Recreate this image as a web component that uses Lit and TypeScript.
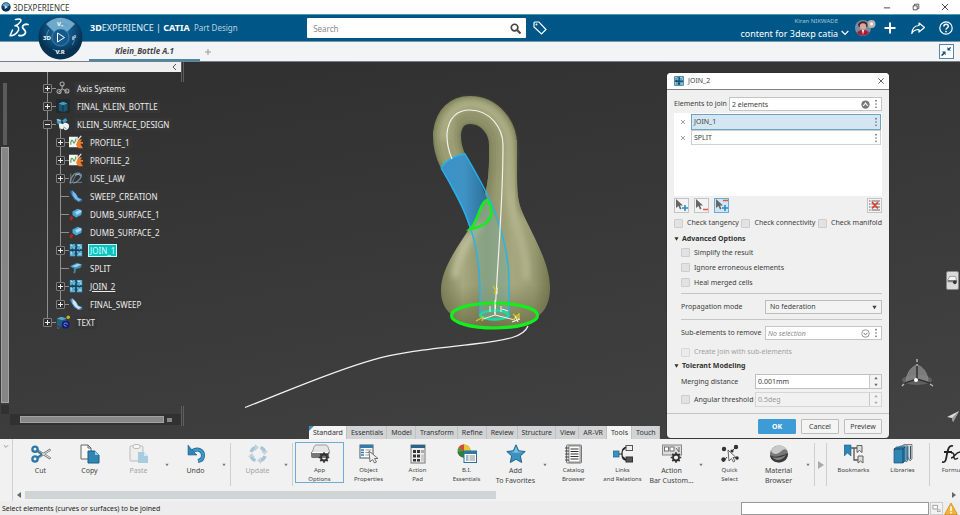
import { LitElement, html, css, svg, nothing } from "lit";
import { customElement, property } from "lit/decorators.js";

const ic = (body: unknown, box = "0 0 20 20", cls = "ic") =>
  html`<svg class=${cls} viewBox=${box} aria-hidden="true">${body}</svg>`;

/* ---------- small glyphs ---------- */
const globe = svg`<circle cx="8" cy="8" r="7.5" fill="#123f66"/><path d="M2 5a7 7 0 0 1 12 0c-3 3-9 3-12 0z" fill="#5aa0cf"/><path d="M6 5l5 3-5 3z" fill="#cfe6f5"/><path d="M1 9c2 6 11 7 14 0-4 3-10 3-14 0z" fill="#0d2b49"/>`;
const joinGlyph = svg`<rect x=".5" y=".5" width="15" height="15" fill="#16455f"/><path d="M1 1h2l1 1 1-1h2v2l1 1-1 1v2H5L4 6 3 7H1zM9 1h6v6h-2l-1 1-1-1H9V5l1-1-1-1zM1 9h2l1 1 1-1h2v2L6 12l1 1v2H1zM9 9h2l1 1 1-1h2v6H9v-2l1-1-1-1z" fill="#5caacb"/><path d="M2 2h2v1H2zM10 2h3v1h-3zM2 10h1v3H2zM11 12h3v1h-3zM5 5h1v1H5zM13 4h1v2h-1z" fill="#c9ecfa"/>`;
const dots = svg`<circle cx="2" cy="2" r="1"/><circle cx="2" cy="6" r="1"/><circle cx="2" cy="10" r="1"/>`;
const cross = svg`<path d="M2 2l8 8M10 2l-8 8" stroke="currentColor" stroke-width="1.4" fill="none"/>`;
const chevDown = svg`<path d="M1 3l5 5 5-5" stroke="currentColor" stroke-width="1.8" fill="none"/>`;
const triDown = svg`<path d="M1 2h10l-5 8z" fill="currentColor"/>`;
const triUp = svg`<path d="M1 10h10l-5-8z" fill="currentColor"/>`;

/* ---------- tree icons, 16 x 16 ---------- */
const sweepBlue = (a: string, b: string) =>
  svg`<path d="M1 3l3-2 4 4 3 5 4 1v3l-4 1-5-3-3-5z" fill=${a}/><path d="M4 2l4 4 2 4 4 2-3 2-4-3-3-4z" fill=${b}/>`;
const treeIcons: Record<string, unknown> = {
  axis: svg`<g fill="none" stroke="#aaa" stroke-width="1.2"><path d="M7 9l-4 4m4-4l6 3M7 9V5"/><circle cx="7" cy="3.500" r="2.300"/><circle cx="3.500" cy="12" r="2.300"/><circle cx="12.500" cy="11.500" r="2.300"/></g>`,
  body: svg`<rect width="16" height="16" fill="#1f2a31"/><path d="M3 5l5-2 5 2v8l-5 2-5-2z" fill="#1d5671"/><path d="M3 5l5-2 5 2-5 2z" fill="#4d9cba"/><path d="M8 7v8" stroke="#0d2c3a"/>`,
  set: svg`<path d="M1 2l5 1v5l-5-1zM7 4l4-3 2 3-4 3z" fill="#3ea0c8"/><path d="M3 7l5 1v6l-4-1zM8 8c2-3 7-1 7 2s-2 5-4 5-4-4-3-7z" fill="#e9f4f8"/><path d="M1 3l4 1" stroke="#bfe8f7"/><path d="M9 11l3 3" stroke="#777"/>`,
  profile: svg`<rect x="0" y="2" width="10" height="12" fill="#f4f4f4"/><path d="M2 11c0-6 2-6 3-3s2 0 3-4" stroke="#58a058" stroke-width="1.3" fill="none"/><path d="M14 1l-6 7" stroke="#ddd" stroke-width="1.6"/><path d="M11 5h4l-2 3h3v2h-3l3 5h-5l-3-4z" fill="#f07a25"/>`,
  law: svg`<path d="M1 14C3 4 8 0 14 4c1 4-5 9-9 10" fill="none" stroke="#6b8fa6" stroke-width="1.4"/><path d="M2 15V3M1 13h14M12 2c-4 2-7 6-8 11" stroke="#8d9ba6" stroke-width=".8" fill="none"/><path d="M7 5c3-2 6-1 6 1" stroke="#b5d6ea" fill="none"/>`,
  sweep: sweepBlue("#2b6fa5", "#7fbbe6"),
  dumb: svg`<path d="M4 5l6-3 5 2-1 5-6 3-4-3z" fill="#4ba7d8"/><path d="M7 6l6-3 1 3-5 3z" fill="#a5dcf5"/><path d="M1 12l2-2 2 2-2 3H1z" fill="#b02525"/>`,
  join: joinGlyph,
  split: svg`<path d="M1 6l8-4 6 2-2 4-5 1-1 5H5l1-5z" fill="#3f8fb5"/><path d="M3 6l7-3 4 1-6 3z" fill="#9fd6ec"/>`,
  final: sweepBlue("#4d87bd", "#cfe5fa"),
  text: svg`<path d="M1 4l5-2 6 2v8l-5 2-6-2z" fill="#255f7c"/><path d="M1 4l5-2 6 2-5 2z" fill="#5ba3be"/><circle cx="14" cy="2.500" r="2" fill="#c9b416"/><circle cx="11" cy="11" r="4.500" fill="#101d7a"/><path d="M9 11a2 2 0 0 1 4 0m-1 2l-3-1" stroke="#8ea3ff" fill="none"/><path d="M1 13l3 1v2H1z" fill="#555"/>`,
};

/* ---------- command icons, 20 x 20 ---------- */
const pageBack = svg`<path d="M1 1h7l3 3v11H1z" fill="#f7f7f7" stroke="#666"/><path d="M8 1v3h3" fill="none" stroke="#666"/>`;
const gear = (x: number, y: number) =>
  svg`<g transform="translate(${x} ${y})"><circle r="3" fill="none" stroke="#333" stroke-width="1.800"/><path d="M0-5.300v2M0 3.300v2M-5.300 0h2M3.300 0h2M-3.700-3.700l1.300 1.300M2.400 2.400l1.300 1.300M3.700-3.700L2.400-2.400M-2.400 2.400l-1.300 1.300" stroke="#333" stroke-width="1.700"/></g>`;
const cmdIcons: Record<string, unknown> = {
  cut: svg`<g fill="none"><path d="M6.500 6.500L19.500 14.500M6.500 14L19.500 5.500" stroke="#777" stroke-width="2.400"/><path d="M8 7.500L19 14M8 13L19 6" stroke="#fff" stroke-width=".8"/><circle cx="4" cy="5.200" r="2.600" stroke="#2b7aa6" stroke-width="2.400"/><circle cx="4" cy="15" r="2.600" stroke="#2b7aa6" stroke-width="2.400"/><path d="M6 7l5 3.500M6 13.500l5-3" stroke="#2b7aa6" stroke-width="1.800"/></g>`,
  copy: svg`${pageBack}<path d="M8 7h7l4 4v8H8z" fill="#2f86b5" stroke="#1d5f87"/><path d="M15 7v4h4z" fill="#8fd0ee"/>`,
  paste: svg`<rect x="1" y="2" width="13" height="15" rx="1" fill="#eee" stroke="#bbb"/><rect x="4" y=".5" width="7" height="4" rx="2" fill="#f6f6f6" stroke="#bbb"/><path d="M9 8h6l4 4v7H9z" fill="#a7cbdf"/><path d="M15 8v4h4z" fill="#d5e9f3"/>`,
  undo: svg`<path d="M6 7.500c6-4 11-1 11 4 0 3-2 5-5 5.500" fill="none" stroke="#1f6591" stroke-width="4"/><path d="M6 7.500c6-4 11-1 11 4 0 3-2 5-5 5.500" fill="none" stroke="#3d97c7" stroke-width="2.600"/><path d="M2 1v10h9L8.500 8.500 6 6z" fill="#2f86b5" stroke="#1f6591" stroke-width=".6"/>`,
  update: svg`<g fill="none" stroke="#a9c5d4" stroke-width="3.400"><path d="M3 8a7 7 0 0 1 4.500-4.500M12.500 3.500A7 7 0 0 1 17 8M17 12a7 7 0 0 1-4.500 4.500M7.500 16.500A7 7 0 0 1 3 12"/></g><path d="M7 0l4 3.500L7 7zM20 7l-3.500 4L13 7zM13 20l-4-3.500L13 13zM0 13l3.500-4L7 13z" fill="#c2d5df"/>`,
  app: svg`<path d="M2 9l2-6c.5-1.500 1-2 3-2h8c2 0 2.500.5 3 2l2 6z" fill="#e6e6e6" stroke="#888" stroke-width=".8"/><path d="M1 8h18v4c0 1.500-1 2-2 2H3c-1 0-2-.5-2-2z" fill="#777"/><path d="M2 8.500h16" stroke="#fff"/>${gear(14, 13.5)}`,
  object: svg`<rect x="1" y="1" width="13" height="13" fill="#fff" stroke="#456"/><rect x="1" y="1" width="13" height="3" fill="#2f7faa"/><path d="M2 6h3M2 8.500h3M2 11h3" stroke="#2f7faa" stroke-width="1.500"/><path d="M6.500 6h6M6.500 8.500h6M6.500 11h6" stroke="#999"/><path d="M10 7l1 11 2.500-2.500L15.500 19l2-1-2-3.500H19z" fill="#eee" stroke="#555" stroke-width=".8"/>`,
  pad: svg`<rect x="3" y="1" width="14" height="18" fill="#eee" stroke="#777"/><rect x="3" y="1" width="14" height="3" fill="#27648a"/><path d="M5 6h3v3H5zM9 6h3v3H9zM5 10.500h3v3H5zM9 10.500h3v3H9zM5 15h3v2.500H5zM9 15h3v2.500H9z" fill="#333"/><path d="M13 6h3v3h-3z" fill="#aaa"/><path d="M13 10.500h3v7h-3z" fill="#ccc"/>`,
  bi: svg`<circle cx="7" cy="7" r="6.500" fill="#4c9a48"/><path d="M7 7V.5A6.500 6.500 0 0 1 13.500 7z" fill="#f0c330"/><path d="M7 7L1.500 3.500A6.500 6.500 0 0 1 7 .5z" fill="#d94a32"/><path d="M7 7l-6.500 1a6.500 6.500 0 0 0 6.500 5.500z" fill="#357b3c"/><rect x="7" y="7" width="12.500" height="11.500" fill="#fff" stroke="#2b6d96"/><rect x="7" y="7" width="12.500" height="3" fill="#2b7aa6"/><path d="M9 12h2.500M9 14h2.500M9 16h2.500" stroke="#2b7aa6" stroke-width="1.200"/><path d="M12.500 12h5.500M12.500 14h5.500M12.500 16h5.500" stroke="#888"/>`,
  star: svg`<path d="M10 .8l2.700 6 6.500.7-4.800 4.400 1.300 6.600L10 15.300l-5.700 3.200 1.300-6.600L.8 7.500l6.500-.7z" fill="#3b92c1" stroke="#24658e"/><path d="M10 2.500l2 5 5 .5c-4 1-9 1-12.500 0l3.500-.5z" fill="#7cc3e3"/>`,
  catalog: svg`<rect x="2.500" y="1" width="15" height="18" rx="1" fill="#ddd" stroke="#777"/><rect x="5" y="2" width="11" height="16" fill="#fff" stroke="#666" stroke-width=".7"/><path d="M6.500 5h8M6.500 7.500h8M6.500 10h8M6.500 12.500h8M6.500 15h8" stroke="#333" stroke-width="1.200"/><path d="M1 4h4M1 7h4M1 10h4M1 13h4M1 16h4" stroke="#444"/>`,
  links: svg`<rect x="0" y="7" width="6" height="6" fill="#3b92c1" stroke="#1f5d85" stroke-width=".7"/><rect x="13" y="1.500" width="6.500" height="5" fill="#eee" stroke="#555"/><rect x="13" y="13" width="6.500" height="5" fill="#555" stroke="#333"/><path d="M6 10h3M13 3.500c-3 0-4 2-4 6.500s1 6 4 6" fill="none" stroke="#222" stroke-width="1.200"/><path d="M10 6l3-3M10 13l3 3" stroke="#222" stroke-width="1.400"/>`,
  actionbar: svg`<rect x=".5" y="1" width="19" height="10" fill="#ddd" stroke="#888"/><rect x="2.500" y="3" width="4" height="4" fill="#fff" stroke="#555" stroke-width=".8"/><rect x="8" y="3" width="4" height="4" fill="#fff" stroke="#555" stroke-width=".8"/><path d="M14 4l3 4V3" stroke="#666" fill="none"/>${gear(14, 13.5)}`,
  quick: svg`<path d="M3 3l3 3M17 2l-4 4M3 18l4-5M16 14l2 1" stroke="#444"/><circle cx="4" cy="5" r="2.200" fill="#333"/><circle cx="16" cy="3" r="2.200" fill="#333"/><circle cx="12" cy="7" r="1.600" fill="#333"/><circle cx="3.500" cy="15.500" r="2.200" fill="#333"/><circle cx="17" cy="14" r="1.800" fill="#333"/><path d="M8 6l1 11 2.500-2.500 2 3.500 1.500-1-2-3.500H16z" fill="#f5f5f5" stroke="#444" stroke-width=".8"/>`,
  material: svg`<ellipse cx="10" cy="10" rx="9" ry="8.500" fill="#777"/><path d="M2 6C6 0 15 0 18 6c-4-3-7 4-11 4C4 10 2 8 2 6z" fill="#c9c9c9"/><path d="M1 11c5 4 13 0 18-2 0 6-4 9.500-9 9.500S1 15 1 11z" fill="#3b3b3b"/><path d="M3 13c5 2 10 0 14-2-3 5-9 7-14 2z" fill="#888"/>`,
  bookmarks: svg`<path d="M0 1h7v11l-3.500-3L0 12z" fill="#2f86b5" stroke="#1d5f87" stroke-width=".6"/><path d="M7 4h6M10 4v12h4" fill="none" stroke="#555" stroke-width="1.300"/><path d="M13 1.500h5v7l-2.500-2-2.500 2zM14 12h5v7l-2.500-2-2.500 2z" fill="#ddd" stroke="#555" stroke-width=".9"/>`,
  libraries: svg`<path d="M9 2l2-1.500h8V15l-2 2z" fill="#dcdcdc" stroke="#555" stroke-width=".7"/><path d="M5 3.500L7.500 2H15v14.500L13 18z" fill="#8fc3de" stroke="#2b5d7c" stroke-width=".7"/><path d="M1 5l2.500-2H12v14l-2 2H1z" fill="#2f86b5" stroke="#1d4f70" stroke-width=".7"/><path d="M1 5h9v14M10 5l2-2M14 3v13M17.500 2v13" fill="none" stroke="#17425e" stroke-width=".9"/>`,
  formula: svg`<path d="M1 18c4 1 4-3 5-8s2-9 6-8M3 8h8" fill="none" stroke="#222" stroke-width="1.800"/><path d="M10 9c3-1 3 2 3 4s1 3 4 1M19 8c-5 0-5 6-9 6" fill="none" stroke="#222" stroke-width="1.400"/>`,
};

interface Cmd { icon: string; text: string; big?: boolean; off?: boolean; menu?: boolean; on?: boolean; slim?: boolean; }
const groups: Cmd[][] = [
  [
    { icon: "cut", text: "Cut", big: true },
    { icon: "copy", text: "Copy", big: true },
    { icon: "paste", text: "Paste", big: true, off: true, menu: true },
    { icon: "undo", text: "Undo", big: true, menu: true },
  ],
  [{ icon: "update", text: "Update", big: true, off: true, menu: true }],
  [
    { icon: "app", text: "App\nOptions", on: true },
    { icon: "object", text: "Object\nProperties" },
    { icon: "pad", text: "Action\nPad" },
    { icon: "bi", text: "B.I.\nEssentials" },
    { icon: "star", text: "Add\nTo Favorites", big: true, menu: true },
    { icon: "catalog", text: "Catalog\nBrowser" },
    { icon: "links", text: "Links\nand Relations" },
    { icon: "actionbar", text: "Action\nBar Custom...", big: true, menu: true },
    { icon: "quick", text: "Quick\nSelect" },
    { icon: "material", text: "Material\nBrowser", big: true, menu: true },
  ],
];
const tail: Cmd[][] = [
  [
    { icon: "bookmarks", text: "Bookmarks" },
    { icon: "libraries", text: "Libraries" },
  ],
  [{ icon: "formula", text: "Formu", slim: true }],
];

@customElement("model-tree")
class ModelTree extends LitElement {
  static styles = css`
    :host { display: flex; flex-direction: column; width: 185px; color: #ededed; font-size: 8px; }
    .bar { height: 10px; width: 181px; background: #efefef; display: flex; justify-content: flex-end; align-items: center; padding-right: 4px; box-sizing: border-box; }
    .fold { border: 0; background: none; padding: 0; width: 6px; height: 8px; color: #555; display: flex; }
    svg { display: block; }
    .fold svg { width: 6px; height: 8px; }
    .main { flex: 1; display: flex; min-height: 0; }
    .rail { width: 8px; margin: 11px 0 0 1px; display: flex; flex-direction: column; gap: 2px; }
    .short { height: 62px; width: 4px; align-self: center; background: #5b5b5b; }
    .long { height: 256px; background: #868686; box-sizing: border-box; border: 1px solid #a3a3a3; }
    .rest { height: 9px; background: #313131; }
    .tree { margin: 0 0 0 34px; padding: 7px 0 0; list-style: none; flex: 1; position: relative; }
    .tree ul { list-style: none; margin: 0; padding: 0 0 0 13px; position: relative; }
    .tree::before { content: ""; position: absolute; left: 4px; top: 0; bottom: 95px; width: 1px; background: #8f8f8f; }
    .tree ul::before { content: ""; position: absolute; left: 17px; top: -4px; bottom: 9px; width: 1px; background: #8f8f8f; }
    .row { display: flex; align-items: center; height: 18px; position: relative; }
    .tg { width: 9px; height: 9px; padding: 0; border: 1px solid #7d7d7d; background: #303030; border-radius: 1px; position: relative; flex: none; display: grid; place-items: center; color: #eee; }
    .tg svg { width: 7px; height: 7px; }
    .stub { width: 9px; flex: none; }
    .link { width: 4px; height: 1px; background: #8f8f8f; }
    .stub + .link { margin-left: -4px; width: 8px; }
    .node { width: 14px; height: 14px; flex: none; margin-right: 5px; }
    .lbl { padding: 0 1px; line-height: 11px; background: #363636; border: 1px solid transparent; }
    .sel { background: #0cc3bf; border-color: #bff; color: #d9ffff; }
    .cur { text-decoration: underline; }
    .foot { display: flex; align-items: center; height: 11px; margin: 0 3px 14px 10px; background: #313131; padding-left: 10px; gap: 3px; }
    .thumb { width: 144px; height: 7px; background: #888; box-sizing: border-box; border: 1px solid #a3a3a3; }
    .nub { width: 5px; height: 4px; background: #888; }
    .grip { position: absolute; left: 181px; width: 1px; border: solid #5e5e5e; border-width: 0 1px; }
    .g1 { top: 0; height: 20px; }
    .g2 { bottom: 13px; height: 20px; }
  `;
  row(label: string, icon: string, sign = "", cls = "") {
    return html`<div class="row">
      ${sign
        ? html`<button class="tg" aria-label="Toggle ${label}">${ic(svg`<path d=${sign === "+" ? "M1 3.5h5M3.5 1v5" : "M1 3.5h5"} stroke="currentColor"/>`, "0 0 7 7", "")}</button>`
        : html`<span class="stub"></span>`}
      <span class="link"></span>
      ${ic(treeIcons[icon], "0 0 16 16", "node")}
      <span class="lbl ${cls}">${label}</span>
    </div>`;
  }
  render() {
    return html`
      <div class="bar"><button class="fold" aria-label="Collapse panel">${ic(svg`<path d="M5 1L2 4l3 3" fill="none" stroke="currentColor"/>`, "0 0 6 8", "")}</button></div>
      <div class="main">
        <div class="rail"><div class="short"></div><div class="long"></div><div class="rest"></div></div>
        <ul class="tree">
          <li>${this.row("Axis Systems", "axis", "+")}</li>
          <li>${this.row("FINAL_KLEIN_BOTTLE", "body", "+")}</li>
          <li>${this.row("KLEIN_SURFACE_DESIGN", "set", "-")}
            <ul>
              <li>${this.row("PROFILE_1", "profile", "+")}</li>
              <li>${this.row("PROFILE_2", "profile", "+")}</li>
              <li>${this.row("USE_LAW", "law", "+")}</li>
              <li>${this.row("SWEEP_CREATION", "sweep")}</li>
              <li>${this.row("DUMB_SURFACE_1", "dumb")}</li>
              <li>${this.row("DUMB_SURFACE_2", "dumb")}</li>
              <li>${this.row("JOIN_1", "join", "+", "sel")}</li>
              <li>${this.row("SPLIT", "split")}</li>
              <li>${this.row("JOIN_2", "join", "+", "cur")}</li>
              <li>${this.row("FINAL_SWEEP", "final", "+")}</li>
            </ul>
          </li>
          <li>${this.row("TEXT", "text", "+")}</li>
        </ul>
      </div>
      <div class="foot"><div class="thumb"></div><div class="nub"></div></div>
      <div class="grip g1"></div><div class="grip g2"></div>
    `;
  }
}

@customElement("join-dialog")
class JoinDialog extends LitElement {
  static styles = css`
    :host { display: block; width: 222px; background: #f0f0f0; border-radius: 4px; color: #3d3d3d; font-size: 7px; line-height: 10px; overflow: hidden; box-shadow: 0 0 0 1px #2a2a2a55; }
    svg { display: block; }
    button, input, select { font: inherit; color: inherit; box-sizing: border-box; margin: 0; }
    .head { height: 16px; background: #fff; border-bottom: 1px solid #807e80; display: flex; align-items: center; gap: 4px; padding: 0 4px 0 7px; }
    .head svg { width: 10px; height: 10px; }
    .title { flex: 1; font-size: 7px; font-weight: normal; margin: 0; }
    .x { border: 0; background: none; padding: 0; display: grid; place-items: center; width: 8px; height: 8px; color: #555; }
    .head .x svg { width: 8px; height: 8px; }
    .body { padding: 7px 7px 6px; }
    .line { display: flex; align-items: center; gap: 2px; }
    .field { flex: 1; display: flex; align-items: center; height: 14px; box-sizing: border-box; border: 1px solid #c4c4c4; background: #fff; padding-right: 3px; gap: 4px; min-width: 0; }
    .field input { flex: 1; min-width: 0; border: 0; outline: 0; background: none; padding: 0 2px; height: 12px; }
    .field input::placeholder { color: #8a8a8a; font-style: italic; opacity: 1; }
    .dots { width: 4px; height: 10px; fill: #666; }
    .round { width: 9px; height: 9px; }
    .list { background: #fff; height: 83px; margin: 2px 0; padding: 1px 1px 0 0; box-sizing: border-box; list-style: none; display: flex; flex-direction: column; }
    .item { display: flex; align-items: center; }
    .item .x { width: 17px; color: #777; }
    .item .x svg { width: 6px; height: 6px; }
    .pick { flex: 1; height: 15px; display: flex; justify-content: space-between; align-items: center; border: 1px solid #d0d0d0; background: #fff; padding: 0 2px; }
    .pick.on { background: #d3e6f1; border-color: #6fa3c2; height: 16px; }
    .tools { display: flex; gap: 5px; margin-bottom: 5px; }
    .tool { width: 15px; height: 15px; padding: 0; border: 1px solid #c4c4c4; background: #f3f3f3; display: grid; place-items: center; }
    .tool svg { width: 13px; height: 13px; }
    .tool.on { background: #cfe5f3; border-color: #6fa9cc; }
    .tool.end { margin-left: auto; }
    .checks { display: flex; justify-content: space-between; margin-bottom: 5px; }
    .chk { display: flex; align-items: center; gap: 4px; white-space: nowrap; }
    .chk input { appearance: none; width: 9px; height: 9px; border: 1px solid #cdcdcd; background: #e2e2e2; border-radius: 1px; }
    .sec { margin: 0; font-size: 7px; line-height: 12px; font-weight: bold; display: flex; align-items: center; gap: 3px; color: #333; }
    .sec svg { width: 5px; height: 6px; }
    .in { padding-left: 7px; }
    .in > .chk { height: 15px; }
    .off { color: #a2a2a2; }
    .in > .chk.off { height: 12px; margin: 6px 0 2px; }
    .off input { background: #ebebeb; border-color: #d8d8d8; }
    .sep { border: 0; border-top: 1px solid #c6c6c6; margin: 3px 0 6px; }
    .sep.b { margin: 5px 0 6px; }
    .w { width: 84px; box-sizing: border-box; white-space: nowrap; }
    .n { width: 74px; white-space: nowrap; }
    .line.tight { gap: 0; }
    .drop { flex: 1; display: grid; align-items: center; }
    .drop select { grid-area: 1 / 1; appearance: none; height: 14px; border: 1px solid #bdbdbd; background: #f3f3f3; padding: 0 4px; border-radius: 0; width: 100%; }
    .drop svg { grid-area: 1 / 1; justify-self: end; width: 5px; height: 5px; margin-right: 5px; pointer-events: none; }
    .spin { flex: 1; display: flex; height: 15px; box-sizing: border-box; border: 1px solid #c0c0c0; background: #fff; }
    .spin input { flex: 1; min-width: 0; border: 0; background: none; padding: 0 2px; outline: 0; }
    .spin.dim { background: #f1f1f1; border-color: #d6d6d6; color: #9a9a9a; }
    .steps { width: 11px; border-left: 1px solid #c8c8c8; display: flex; flex-direction: column; background: #f3f3f3; }
    .step { flex: 1; border: 0; background: none; padding: 0; display: grid; place-items: center; color: #666; }
    .dim .step { color: #aaa; }
    .step svg { width: 4px; height: 4px; }
    .stack { display: flex; flex-direction: column; gap: 3px; margin-top: 2px; }
    .foot { border-top: 1px solid #c4c4c4; padding: 5px 7px 4px; display: flex; justify-content: flex-end; gap: 5px; }
    .btn { width: 38px; height: 15px; padding: 0; border: 1px solid #bdbdbd; background: #f4f4f4; border-radius: 1px; line-height: 12px; }
    .ok { background: #3d9bd5; border-color: #3d9bd5; color: #fff; font-weight: bold; }
  `;
  chk(text: string, off = false) {
    return html`<label class="chk ${off ? "off" : ""}"><input type="checkbox" ?disabled=${off}>${text}</label>`;
  }
  spin(v: string, id: string, dim = false) {
    return html`<div class="spin ${dim ? "dim" : ""}"><input id=${id} aria-label=${id} .value=${v} ?disabled=${dim}>
      <span class="steps"><button class="step" aria-label="Increase">${ic(triUp, "0 0 12 12", "")}</button><button class="step" aria-label="Decrease">${ic(triDown, "0 0 12 12", "")}</button></span></div>`;
  }
  render() {
    const d = ic(dots, "0 0 4 12", "dots");
    const x = ic(cross, "0 0 12 12", "");
    const arrow = svg`<path d="M1 0v9l2.500-2 1.500 3.500 1.500-.7L5 6.500h3z" fill="#666"/>`;
    return html`
      <div class="head">${ic(joinGlyph, "0 0 16 16", "")}<h2 class="title">JOIN_2</h2><button class="x" aria-label="Close">${x}</button></div>
      <div class="body">
        <div class="line"><label for="els">Elements to join</label>
          <div class="field"><input id="els" .value=${"2 elements"}>
            ${ic(svg`<circle cx="6" cy="6" r="5.500" fill="#777"/><path d="M3 8l3-4 3 4" fill="none" stroke="#fff" stroke-width="1.500"/>`, "0 0 12 12", "round")}${d}</div></div>
        <ul class="list">
          <li class="item"><button class="x" aria-label="Remove JOIN_1">${x}</button><button class="pick on">JOIN_1${d}</button></li>
          <li class="item"><button class="x" aria-label="Remove SPLIT">${x}</button><button class="pick">SPLIT${d}</button></li>
        </ul>
        <div class="tools">
          <button class="tool" aria-label="Add">${ic(svg`${arrow}<path d="M10 6v6M7 9h6" stroke="#2b8cc9" stroke-width="1.600"/>`, "0 0 13 13", "")}</button>
          <button class="tool" aria-label="Remove">${ic(svg`${arrow}<path d="M8 10.500h5" stroke="#e0564a" stroke-width="1.500"/>`, "0 0 13 13", "")}</button>
          <button class="tool on" aria-label="Add or remove">${ic(svg`${arrow}<path d="M8 1.500h5" stroke="#e0564a" stroke-width="1.500"/><path d="M10 6v6M7 9h6" stroke="#2b8cc9" stroke-width="1.600"/>`, "0 0 13 13", "")}</button>
          <button class="tool end" aria-label="Clear">${ic(svg`<path d="M3.500 2H12M3.500 5H12M3.500 8H12M3.500 11H12M1 2h1.500M1 5h1.500M1 8h1.500M1 11h1.500" stroke="#666"/><path d="M4 3l6 6.500M10 3L4 9.500" stroke="#e23b2e" stroke-width="1.600"/>`, "0 0 13 13", "")}</button>
        </div>
        <div class="checks">${this.chk("Check tangency")}${this.chk("Check connectivity")}${this.chk("Check manifold")}</div>
        <h3 class="sec">${ic(triDown, "0 0 12 12", "")}Advanced Options</h3>
        <div class="in">
          ${this.chk("Simplify the result")}${this.chk("Ignore erroneous elements")}${this.chk("Heal merged cells")}
          <hr class="sep">
          <div class="line tight"><label class="w" for="prop">Propagation mode</label>
            <div class="drop"><select id="prop"><option>No federation</option></select>${ic(triDown, "0 0 12 12", "")}</div></div>
          <hr class="sep b">
          <div class="line tight"><label class="w" for="sub">Sub-elements to remove</label>
            <div class="field"><input id="sub" placeholder="No selection">
              ${ic(svg`<circle cx="6" cy="6" r="5" fill="none" stroke="#777"/><path d="M3.500 5L6 8l2.500-3" fill="none" stroke="#777" stroke-width="1.200"/>`, "0 0 12 12", "round")}${d}</div></div>
          ${this.chk("Create join with sub-elements", true)}
        </div>
        <h3 class="sec">${ic(triDown, "0 0 12 12", "")}Tolerant Modeling</h3>
        <div class="in stack">
          <div class="line tight"><label class="n" for="merge">Merging distance</label>${this.spin("0.001mm", "merge")}</div>
          <div class="line tight"><span class="n">${this.chk("Angular threshold")}</span>${this.spin("0.5deg", "angle", true)}</div>
        </div>
      </div>
      <div class="foot"><button class="btn ok">OK</button><button class="btn">Cancel</button><button class="btn">Preview</button></div>
    `;
  }
}

@customElement("cmd-button")
class CmdButton extends LitElement {
  @property({ attribute: false }) cmd!: Cmd;
  static styles = css`
    :host { display: flex; flex: none; }
    .cmd { width: 49px; height: 41px; margin: 3px 0 0; padding: 1px 0 0; border: 1px solid transparent; background: none; font: 6px/9px "Noto Sans", sans-serif; color: #444; display: flex; flex-direction: column; align-items: center; gap: 2px; white-space: pre; box-sizing: border-box; }
    .slim { width: 38px; }
    .big { font-size: 7px; line-height: 10px; }
    .on { border-color: #6aaed6; }
    .off { color: #a5a5a5; }
    svg { width: 20px; height: 20px; display: block; flex: none; }
    .more { width: var(--more, 9px); padding: 0; border: 0; background: none; color: #777; display: grid; place-items: center; margin-top: 5px; height: 41px; }
    .more svg { width: 4px; height: 4px; }
  `;
  render() {
    const c = this.cmd;
    return html`<button class="cmd ${c.big ? "big" : ""} ${c.on ? "on" : ""} ${c.off ? "off" : ""} ${c.slim ? "slim" : ""}">${ic(cmdIcons[c.icon])}<span>${c.text}</span></button>
      ${c.menu ? html`<button class="more" aria-label="More">${ic(triDown, "0 0 12 12")}</button>` : nothing}`;
  }
}

@customElement("model-scene")
class ModelScene extends LitElement {
  static styles = css`
    :host { display: block; }
    svg { display: block; width: 100%; height: 100%; }
  `;
  render() {
    const tube = "M453 161C446 147 447 136 447 133C449 117 458 110 470 110C490 110 503 128 503 145V195";
    const body = "M489 140H517V168C517 186 517 198 521 209C530 231 550 261 550 288C550 302 545 311 537 317C530 331 458 331 451 314C444 308 441 300 441 290C441 268 460 243 472 225C482 208 489 190 489 160Z";
    return html`<svg viewBox="0 62 960 377" preserveAspectRatio="xMidYMid meet" aria-label="Klein bottle model">
      <defs>
        <linearGradient id="bg" x1="0" x2="1"><stop offset="0" stop-color="#7e8159"/><stop offset=".2" stop-color="#a6a87e"/><stop offset=".42" stop-color="#8f9269"/><stop offset=".66" stop-color="#a6a77e"/><stop offset=".85" stop-color="#989a72"/><stop offset="1" stop-color="#75784f"/></linearGradient>
        <linearGradient id="fade" x1="0" x2="0" y1="0" y2="1"><stop offset="0" stop-color="#65683f" stop-opacity="0"/><stop offset="1" stop-color="#65683f" stop-opacity=".8"/></linearGradient>
        <linearGradient id="out" gradientUnits="userSpaceOnUse" x1="0" x2="0" y1="150" y2="194"><stop offset="0" stop-color="#fff"/><stop offset="1" stop-color="#000"/></linearGradient>
        <mask id="mk" maskUnits="userSpaceOnUse" x="420" y="80" width="110" height="120"><path d="M420 80h64v120h-64z" fill="#fff"/><path d="M484 80h46v120h-46z" fill="url(#out)"/></mask>
        <linearGradient id="bl" x1="0" x2="1"><stop offset="0" stop-color="#3b91c6"/><stop offset=".5" stop-color="#3f93c4"/><stop offset="1" stop-color="#2c6f9c"/></linearGradient>
        <filter id="b2" x="-30%" y="-30%" width="160%" height="160%"><feGaussianBlur stdDeviation="3"/></filter>
        <clipPath id="cb"><path d=${body}/></clipPath>
      </defs>
      <path d=${body} fill="url(#bg)"/>
      <g clip-path="url(#cb)">
        <path d="M490 140C490 180 484 205 470 235" stroke="#84875f" stroke-width="10" fill="none" filter="url(#b2)"/>
        <path d="M517 140V175C517 195 518 205 523 215" stroke="#7a7d55" stroke-width="5" fill="none" filter="url(#b2)"/>
        <path d="M440 285h112v45h-112z" fill="url(#fade)"/>
        <path d="M480 224C468 240 456 258 455 278" stroke="#c4c5a2" stroke-width="6" fill="none" filter="url(#b2)"/>
        <path d="M508 140V180C510 220 528 245 526 280" stroke="#b5b68e" stroke-width="7" fill="none" filter="url(#b2)"/>
      </g>
      <g mask="url(#mk)">
        <path d=${tube} fill="none" stroke="#7f825a" stroke-width="28"/>
        <path d=${tube} fill="none" stroke="#8b8e65" stroke-width="25"/>
        <path d=${tube} fill="none" stroke="#94966d" stroke-width="20"/>
        <path d=${tube} fill="none" stroke="#9b9d74" stroke-width="14"/>
        <path d="M444 140C444 116 458 103 471 104C492 104 509 124 510 148V195" fill="none" stroke="#b0b188" stroke-width="7" filter="url(#b2)"/>
        <path d="M456 124C458 119 463 115 471 115C484 115 494 126 496 142V178" fill="none" stroke="#6f7250" stroke-width="3" opacity=".6" filter="url(#b2)"/>
      </g>
      <path d="M470 229L486 198C498 222 508 250 509 280V317C500 322 488 322 480 317V288C480 262 476 245 470 229Z" fill="#7fb09c" opacity=".5"/>
      <path d="M441 168C446 160 456 155 465 154C472 166 480 180 487 199L470 229C463 206 452 190 441 168Z" fill="url(#bl)"/>
      <path d="M441 168C446 160 456 155 465 154C482 183 508 226 509 280V317M441 168C456 192 480 232 480 288V317" fill="none" stroke="#23b4f0" stroke-width="1.400"/>
      <path d="M452 159C446 145 447 136 447 133C449 117 458 110 470 110C490 110 503 128 503 145C503 200 499 240 495 314" fill="none" stroke="#f3f3ea" stroke-width="1.200"/>
      <path d="M470 229C478 222 480 202 487 200C491 205 493 213 490 218C486 226 477 228 470 229Z" fill="none" stroke="#14ee1e" stroke-width="2.600"/>
      <path d="M528 326C524 336 510 340 474 344C430 349 400 352 372 360C330 372 290 390 245 407.500" fill="none" stroke="#f2f2f2" stroke-width="1.300"/>
      <ellipse cx="494.500" cy="315.500" rx="43" ry="12.500" fill="none" stroke="#14ee1e" stroke-width="3.200"/>
      <ellipse cx="494.500" cy="315" rx="14" ry="4.500" fill="none" stroke="#18dca0" stroke-width="2.400"/>
      <path d="M490 312v-6M501 312v-6M495 300v15l-12 4M495 315l20 5M502 309l6 2" stroke="#f3f3f3" fill="none"/>
      <g stroke="#d8c51f" stroke-width="1.300" fill="none"><path d="M493 286l3 5 2-4M495 291v3M476 321l7-4-1 4M513 314l6 5M513 320l6-6M519 313v6"/></g>
      <path d="M497 288v6M512 322l8-3M515 316l3 6" stroke="#fff"/>

      <g stroke="#8d8d8d" fill="none"><ellipse cx="917" cy="380" rx="15" ry="5" fill="#6d6d6d" stroke="none" opacity=".7"/><path d="M917 365c7 2 11 9 11 17l-11-3-11 4c0-8 4-16 11-18z" fill="#8a8a8a" stroke="#a5a5a5" stroke-width=".7" opacity=".8"/><path d="M917 379v-14M917 379l13 4M917 379l-12 4" stroke="#333" stroke-width="1.600"/></g>
      <circle cx="916" cy="380" r="2" fill="#fff"/><path d="M917 359v3M917 364v2M904 384l-2 2M930 384l3 2" stroke="#bbb" stroke-width="1.400"/>
      <path d="M959 411l-12 6 5 1 1 4z" fill="#ddd"/><path d="M959 411l-7 7 1 4z" fill="#999"/>
    </svg>`;
  }
}

@customElement("app-root")
class AppRoot extends LitElement {
  static styles = css`
    :host { display: flex; flex-direction: column; min-height: 100vh; font-family: "Noto Sans", "Open Sans", sans-serif; font-size: 7px; background: #eee; overflow: hidden; }
    button, input { font: inherit; color: inherit; box-sizing: border-box; }
    button { border: 0; background: none; padding: 0; }
    svg { display: block; }
    .win { height: 14px; background: #fff; display: flex; align-items: center; font-size: 8px; color: #333; gap: 2px; padding: 0 11px 0 1px; }
    .win .ic { width: 10px; height: 10px; }
    .wname { flex: 1; }
    .ctl { display: flex; gap: 21px; color: #333; }
    .ctl svg { width: 8px; height: 8px; }
    .head { height: 28px; background: #005686; border-bottom: 1px solid #7d93a0; border-top: 1px solid #4b9fb6; box-sizing: border-box; display: flex; align-items: center; color: #fff; position: relative; }
    .left { width: 32%; box-sizing: border-box; display: flex; align-items: center; padding-left: 9px; }
    .ds { width: 20px; height: 20px; }
    .brand { margin: 0 0 0 61px; font-size: 9px; font-weight: normal; line-height: 12px; white-space: pre; color: #e4eff5; }
    .brand b { color: #fff; }
    .brand small { margin-left: 2px; font-size: 8px; color: #b6d3e2; }
    .compass { position: absolute; left: 38px; top: 0; width: 45px; height: 45px; z-index: 2; }
    .compass text { font: bold 6px "Noto Sans", sans-serif; fill: #fff; }
    .search { width: 219px; height: 20px; background: #fff; display: flex; align-items: center; padding-right: 5px; box-sizing: border-box; border-radius: 1px; }
    .search input { flex: 1; border: 0; outline: 0; background: none; padding: 0 6px; font-size: 8px; color: #333; min-width: 0; }
    .search input::placeholder { color: #8b8b8b; opacity: 1; }
    .search svg { width: 11px; height: 11px; }
    .tag { margin-left: 7px; }
    .tag svg { width: 14px; height: 14px; }
    .user { margin-left: auto; text-align: right; line-height: 10px; }
    .who { font-size: 6px; color: #a3c6d8; line-height: 9px; padding-bottom: 3px; }
    .space { font-size: 9px; display: flex; align-items: center; }
    .user + svg { width: 8px; height: 8px; margin: 10px 0 0 3px; }
    .tools { display: flex; align-items: center; gap: 14px; padding: 0 7px 0 5px; }
    .tools svg { width: 14px; height: 14px; }
    .tools .av { width: 22px; height: 18px; margin-right: -7px; }
    .docs { height: 20px; background: #f2f4f6; border-bottom: 1px solid #738086; box-sizing: border-box; display: flex; align-items: center; padding: 0 6px 0 89px; }
    .doc { width: 111px; height: 19px; border-bottom: 2px solid #4886aa; font-size: 8px; font-weight: bold; font-style: italic; color: #444; }
    .plus { margin-left: 4px; color: #999; }
    .plus svg { width: 8px; height: 8px; }
    .min { margin-left: auto; width: 15px; height: 15px; border: 1px solid #5289aa; background: #fff; display: grid; place-items: center; }
    .min svg { width: 11px; height: 11px; }
    .stage { flex: 1; position: relative; display: flex; min-height: 377px; background: linear-gradient(170deg, #2f2f2f 0%, #363636 35%, #434343 100%); overflow: hidden; }
    model-scene { position: absolute; inset: 0; }
    model-tree { position: relative; }
    join-dialog { position: absolute; top: 11px; right: 71px; z-index: 1; }
    .side { position: absolute; right: 1px; top: 209px; width: 13px; height: 19px; background: #dadada; border-radius: 2px; border: 1px solid #888; display: grid; place-items: center; }
    .side svg { width: 11px; height: 11px; }
    .tabs { position: absolute; bottom: 0; left: 309px; display: flex; height: 13px; background: #d2d3d5; color: #333; }
    .tab { padding: 0 3px 0 4px; border-right: 1px solid #bfc1c3; white-space: nowrap; }
    .tab.on { background: #f4f4f4; }
    .tab:first-child { background: linear-gradient(135deg, #3d8fc0 3px, #f4f4f4 4px); }
    .ribbon { display: flex; height: 62px; background: #f1f1f1; }
    .pull { width: 13px; border-right: 1px solid #cfcfcf; display: flex; justify-content: center; padding-top: 5px; color: #777; box-sizing: border-box; }
    .pull svg { width: 6px; height: 5px; }
    .deck { flex: 1; min-width: 0; display: flex; flex-direction: column; }
    .cmds { display: flex; padding-left: 3px; height: 51px; overflow: hidden; }
    .edit { --more: 8px; }
    .vs { width: 1px; margin: 4px 2px 4px; background: #cfcfcf; flex: none; }
    .next { width: 7px; color: #aaa; flex: none; display: grid; place-items: center; }
    .next svg { width: 6px; height: 8px; }
    .scroll { display: flex; align-items: center; height: 9px; padding: 0 4px 0 4px; gap: 4px; color: #666; }
    .scroll svg { width: 4px; height: 6px; }
    .trk { flex: 1; display: flex; }
    .thumb { width: 51%; height: 8px; background: #cfd4d5; }
    .status { height: 14px; background: #ededed; display: flex; align-items: center; padding: 0 2px; color: #222; gap: 1px; }
    .msg { flex: 1; }
    .cmdline { width: 188px; height: 13px; border: 1px solid #999; background: #fff; padding: 0 2px; }
    .sq { width: 13px; height: 13px; border: 1px solid #ccc; display: grid; place-items: center; background: #f2f2f2; }
    .sq svg { width: 9px; height: 9px; }
    .warn, .warn svg { width: 14px; height: 13px; }
  `;
  render() {
    const tabs = ["Standard", "Essentials", "Model", "Transform", "Refine", "Review", "Structure", "View", "AR-VR", "Tools", "Touch"];
    const vs = html`<span class="vs"></span>`;
    return html`
      <div class="win">${ic(globe, "0 0 16 16")}<span class="wname">3DEXPERIENCE</span>
        <span class="ctl">
          <button aria-label="Minimize">${ic(svg`<path d="M1 5.500h7" stroke="#333"/>`, "0 0 9 9", "")}</button>
          <button aria-label="Restore">${ic(svg`<path d="M1.500 3.500h5v5h-5zM3 3V1.500h5.500V7H7" fill="none" stroke="#333"/>`, "0 0 10 10", "")}</button>
          <button aria-label="Close">${ic(svg`<path d="M1 1l7 7M8 1L1 8" stroke="#333"/>`, "0 0 9 9", "")}</button>
        </span></div>
      <header class="head">
        <div class="left">
          ${ic(svg`<g fill="none" stroke="#fff" stroke-linecap="round" stroke-linejoin="round"><path d="M6.500 1.500c4-.9 6.500-.3 5 2.200C10.300 5.500 8.500 7 6 7.800c4 0 4.500 3 2.700 5.700C7 16 4 17.800 1 17.800L3.500 12" stroke-width="1.500"/><path d="M19 6.500c-3-.8-5.500.5-5.500 2.500s3.500 3 3 5.500-3.500 3.500-6.500 3" stroke-width="1.800"/></g>`, "0 0 20 20", "ds")}
          <h1 class="brand"><b>3D</b>EXPERIENCE | <b>CATIA</b> <small>Part Design</small></h1>
        </div>
        <svg class="compass" viewBox="0 0 45 45" aria-label="Compass">
          <defs><radialGradient id="cg" cx=".5" cy=".35"><stop offset="0" stop-color="#1f73a5"/><stop offset=".7" stop-color="#0d4a76"/><stop offset="1" stop-color="#073252"/></radialGradient></defs>
          <circle cx="22.500" cy="22.500" r="22" fill="url(#cg)"/>
          <path d="M8 9a20 20 0 0 1 29 0l-8 8a9 9 0 0 0-13 0z" fill="#6ea9cc"/>
          <circle cx="22.500" cy="22.500" r="14" fill="none" stroke="#5c9cc2" stroke-width=".8" stroke-dasharray="8 14"/>
          <circle cx="22.500" cy="22.500" r="8.500" fill="#14598a" stroke="#4f96c0" stroke-width=".7"/>
          <path d="M19.500 18l7 4.500-7 4.500z" fill="none" stroke="#fff"/>
          <text x="19" y="11">V₊</text><text x="5" y="25">3D</text><text x="17.500" y="39">V.R</text><text x="34" y="25">i²</text>
        </svg>
        <label class="search"><input type="text" placeholder="Search" aria-label="Search">${ic(svg`<circle cx="5" cy="5" r="3.600" fill="none" stroke="#444" stroke-width="1.800"/><path d="M8 8l3.500 3.500" stroke="#444" stroke-width="2.200"/>`, "0 0 12 12")}</label>
        <button class="tag" aria-label="Tags">${ic(svg`<path d="M1 2c0-.6.400-1 1-1h4l7 7.500-4.500 4.500L1 6z" fill="none" stroke="#fff" stroke-width="1.200"/><circle cx="3.500" cy="3.500" r="1" fill="#fff"/>`, "0 0 14 14")}</button>
        <div class="user"><div class="who">Kiran NIKWADE</div><div class="space">content for 3dexp catia</div></div>
        ${ic(chevDown, "0 0 12 12")}
        <div class="tools">
          ${ic(svg`<circle cx="9" cy="9" r="8" fill="#7e8aa0"/><path d="M4 6c1-5 9-5 10 0l-1 2H5z" fill="#3a2a32"/><circle cx="9" cy="7.500" r="3.200" fill="#d9a79a"/><path d="M3 14c1-4 11-4 12 0a8 8 0 0 1-12 0z" fill="#a51f35"/><path d="M8 11h2l-1 5z" fill="#fff"/><circle cx="17.500" cy="5" r="4" fill="#b8b4b0"/><circle cx="17.500" cy="5" r="1.400" fill="#fff"/>`, "0 0 22 18", "av")}
          <button aria-label="Add">${ic(svg`<path d="M7 1.500v11M1.500 7h11" stroke="#fff" stroke-width="2"/>`, "0 0 14 14")}</button>
          <button aria-label="Share">${ic(svg`<path d="M8 2l5.500 4.500L8 11V8.500C4 8.500 2 10 .8 12.500 1 8 3.500 4.800 8 4.500z" fill="none" stroke="#fff" stroke-width="1.200" stroke-linejoin="round"/>`, "0 0 14 14")}</button>
          <button aria-label="Help">${ic(svg`<circle cx="7" cy="7" r="6.200" fill="none" stroke="#fff" stroke-width="1.200"/><path d="M4.800 5.500c0-3 4.500-2.800 4.500-.2 0 1.700-2.300 1.700-2.300 3.400" fill="none" stroke="#fff" stroke-width="1.400"/><circle cx="7" cy="10.600" r=".9" fill="#fff"/>`, "0 0 14 14")}</button>
        </div>
      </header>
      <div class="docs"><button class="doc">Klein_Bottle A.1</button>
        <button class="plus" aria-label="New tab">${ic(svg`<path d="M4 1v6M1 4h6" stroke="currentColor"/>`, "0 0 8 8")}</button>
        <button class="min" aria-label="Exit full view">${ic(svg`<path d="M7 1v4h4L9.500 3.800 11 2 10 1 8.400 2.500zM1 6h4v4L3.800 8.800 1.500 11 0 10l2.300-2.600z" fill="#15577f"/>`, "0 0 12 12")}</button></div>
      <main class="stage">
        <model-scene></model-scene>
        <model-tree></model-tree>
        <nav class="tabs">${tabs.map((t) => html`<button class="tab ${t === "Standard" || t === "Tools" ? "on" : ""}">${t}</button>`)}</nav>
        <button class="side" aria-label="Display options">${ic(svg`<path d="M2 3l1-2h6l1 2v4H1V4z" fill="#f5f5f5" stroke="#777" stroke-width=".7"/><path d="M1 5h10v2H1z" fill="#777"/><circle cx="8.500" cy="7.500" r="2" fill="#333"/>`, "0 0 12 11")}</button>
        <join-dialog></join-dialog>
      </main>
      <div class="ribbon">
        <div class="pull">${ic(chevDown, "0 0 12 12")}</div>
        <div class="deck">
          <div class="cmds">
            ${groups.map((g, i) => html`${g.map((c) => html`<cmd-button class=${i < 2 ? "edit" : ""} .cmd=${c}></cmd-button>`)}${vs}`)}
            <button class="next" aria-label="Next commands">${ic(svg`<path d="M0 0l6 4-6 4z" fill="currentColor"/>`, "0 0 6 8")}</button>${vs}
            ${tail.map((g, i) => html`${i ? vs : nothing}${g.map((c) => html`<cmd-button .cmd=${c}></cmd-button>`)}`)}
          </div>
          <div class="scroll">${ic(svg`<path d="M4 0v6L0 3z" fill="currentColor"/>`, "0 0 4 6")}<div class="trk"><div class="thumb"></div></div>${ic(svg`<path d="M0 0v6l4-3z" fill="currentColor"/>`, "0 0 4 6")}</div>
        </div>
      </div>
      <footer class="status"><span class="msg">Select elements (curves or surfaces) to be joined</span>
        <input class="cmdline" type="text" aria-label="Command">
        <button class="sq" aria-label="Windows">${ic(svg`<rect x="1" y="1" width="5" height="4" fill="#fff" stroke="#999"/><rect x="6" y="6" width="3" height="2" fill="#fff" stroke="#999" stroke-width=".8"/>`, "0 0 10 9")}</button>
        <button class="warn" aria-label="Warnings">${ic(svg`<path d="M7 1l6.500 11.500H.5z" fill="#f5b335" stroke="#d08a1c" stroke-width=".8" stroke-linejoin="round"/><path d="M7 4.500v4.500" stroke="#fff" stroke-width="1.600"/><circle cx="7" cy="10.700" r=".9" fill="#fff"/>`, "0 0 14 13")}</button>
      </footer>`;
  }
}
